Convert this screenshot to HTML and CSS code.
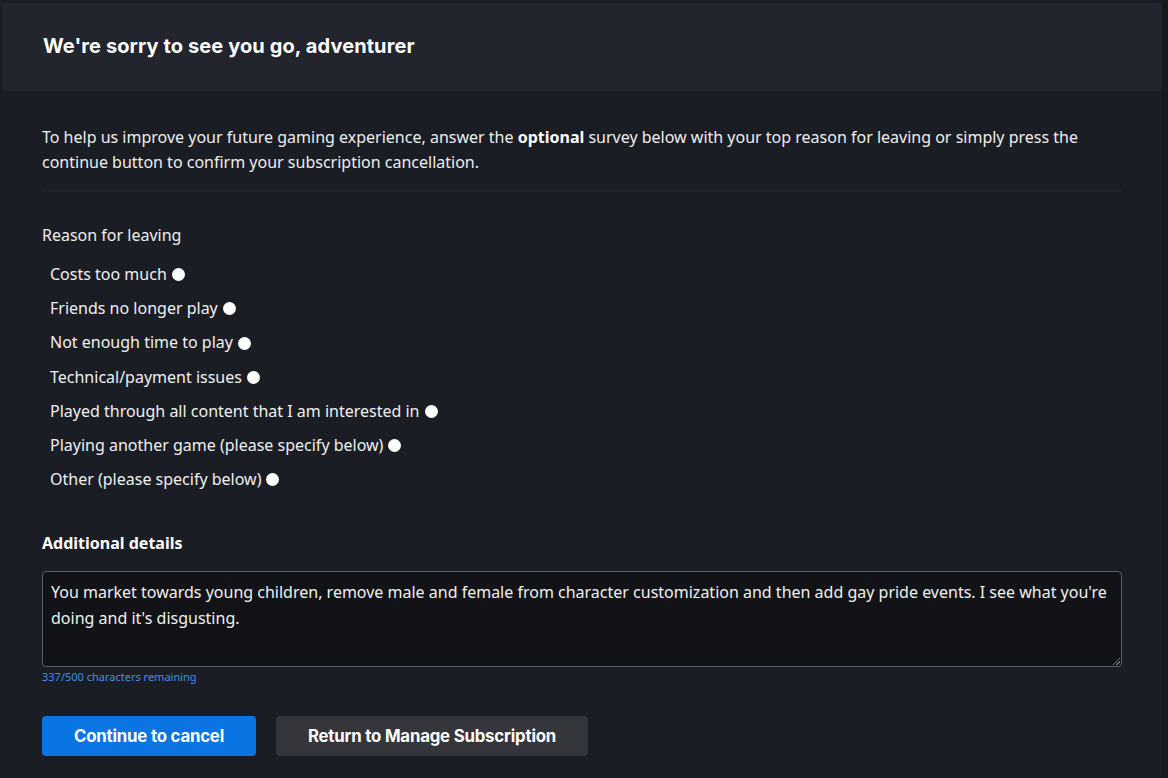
FILE: index.html
```html
<!DOCTYPE html>
<html lang="en">
<head>
<meta charset="utf-8">
<title>Cancel subscription</title>
<link rel="stylesheet" href="styles.css">
</head>
<body>
<div class="page">
  <header class="header">
    <h1 class="title">We're sorry to see you go, adventurer</h1>
  </header>
  <main class="content">
    <p class="intro">To help us improve your future gaming experience, answer the <strong>optional</strong> survey below with your top reason for leaving or simply press the continue button to confirm your subscription cancellation.</p>
    <hr class="divider">
    <fieldset class="reasons">
      <legend class="reasons-label">Reason for leaving</legend>
      <label class="option">Costs too much <span class="radio"></span></label>
      <label class="option">Friends no longer play <span class="radio"></span></label>
      <label class="option">Not enough time to play <span class="radio"></span></label>
      <label class="option">Technical/payment issues <span class="radio"></span></label>
      <label class="option">Played through all content that I am interested in <span class="radio"></span></label>
      <label class="option">Playing another game (please specify below) <span class="radio"></span></label>
      <label class="option">Other (please specify below) <span class="radio"></span></label>
    </fieldset>
    <div class="details">
      <div class="details-label">Additional details</div>
      <div class="textarea">You market towards young children, remove male and female from character customization and then add gay pride events. I see what you're doing and it's disgusting.<span class="grip"></span></div>
      <div class="counter">337/500 characters remaining</div>
    </div>
    <div class="actions">
      <button class="btn btn-primary">Continue to cancel</button>
      <button class="btn btn-secondary">Return to Manage Subscription</button>
    </div>
  </main>
</div>
</body>
</html>
```

FILE: styles.css
```css
html {
  background: #17191e;
}
body {
  margin: 0;
  height: 778px;
  overflow: hidden;
  font-family: "Noto Sans", "Open Sans", sans-serif;
  color: #f2f2f2;
}
.page {
  margin-right: 6px;
  height: 778px;
  background: #1b1d24;
  padding-top: 3px;
  box-sizing: border-box;
}
.header {
  margin-left: 2px;
  height: 88px;
  background: #22252d;
  border-radius: 4px;
  display: flex;
  align-items: center;
  padding-left: 41px;
}
.title {
  margin: 0;
  font-family: Inter, "Liberation Sans", sans-serif;
  font-size: 20px;
  font-weight: 700;
  color: #ffffff;
  letter-spacing: 0.1px;
  padding-bottom: 2px;
}
.content {
  padding: 0 40px 0 42px;
}
.intro {
  margin: 34px 0 0;
  font-size: 16px;
  line-height: 25px;
  color: #eeeeee;
}
.intro strong {
  font-weight: 700;
  color: #ffffff;
}
.divider {
  margin: 15px 0 0;
  border: 0;
  height: 2px;
  background: #20232a;
}
.reasons {
  margin: 32px 0 0;
  padding: 0;
  border: 0;
  display: flex;
  flex-direction: column;
}
.reasons-label {
  padding: 0;
  font-size: 16px;
  line-height: 22px;
  color: #eeeeee;
}
.option {
  margin-left: 8px;
  font-size: 16px;
  line-height: 34.2px;
  display: flex;
  align-items: center;
  gap: 5px;
  color: #f0f0f0;
}
.reasons-label + .option {
  margin-top: 11px;
}
.radio {
  width: 13px;
  height: 13px;
  border-radius: 50%;
  background: #ffffff;
  margin-top: 1px;
}
.details {
  margin-top: 36px;
}
.details-label {
  font-size: 16px;
  font-weight: 700;
  line-height: 22px;
  color: #ffffff;
}
.textarea {
  position: relative;
  margin-top: 17px;
  height: 96px;
  box-sizing: border-box;
  border: 1px solid #5b5e65;
  border-radius: 4px;
  background: #121317;
  padding: 7px 8px;
  font-size: 16px;
  line-height: 26px;
  color: #f0f0f0;
}
.grip {
  position: absolute;
  right: 1px;
  bottom: 1px;
  width: 7px;
  height: 7px;
  background: linear-gradient(135deg, transparent 45%, #777 45%, #777 55%, transparent 55%, transparent 70%, #777 70%, #777 80%, transparent 80%);
}
.counter {
  margin-top: 2px;
  font-size: 11px;
  line-height: 15px;
  color: #3d8fe8;
}
.actions {
  margin-top: 32px;
  display: flex;
  gap: 20px;
}
.btn {
  height: 40px;
  border: 0;
  border-radius: 4px;
  font-family: Inter, "Liberation Sans", sans-serif;
  font-size: 16.8px;
  font-weight: 700;
  color: #ffffff;
  letter-spacing: -0.2px;
  padding: 0;
}
.btn-primary {
  width: 214px;
  background: #0a74e3;
}
.btn-secondary {
  width: 312px;
  background: #35363c;
}
```
